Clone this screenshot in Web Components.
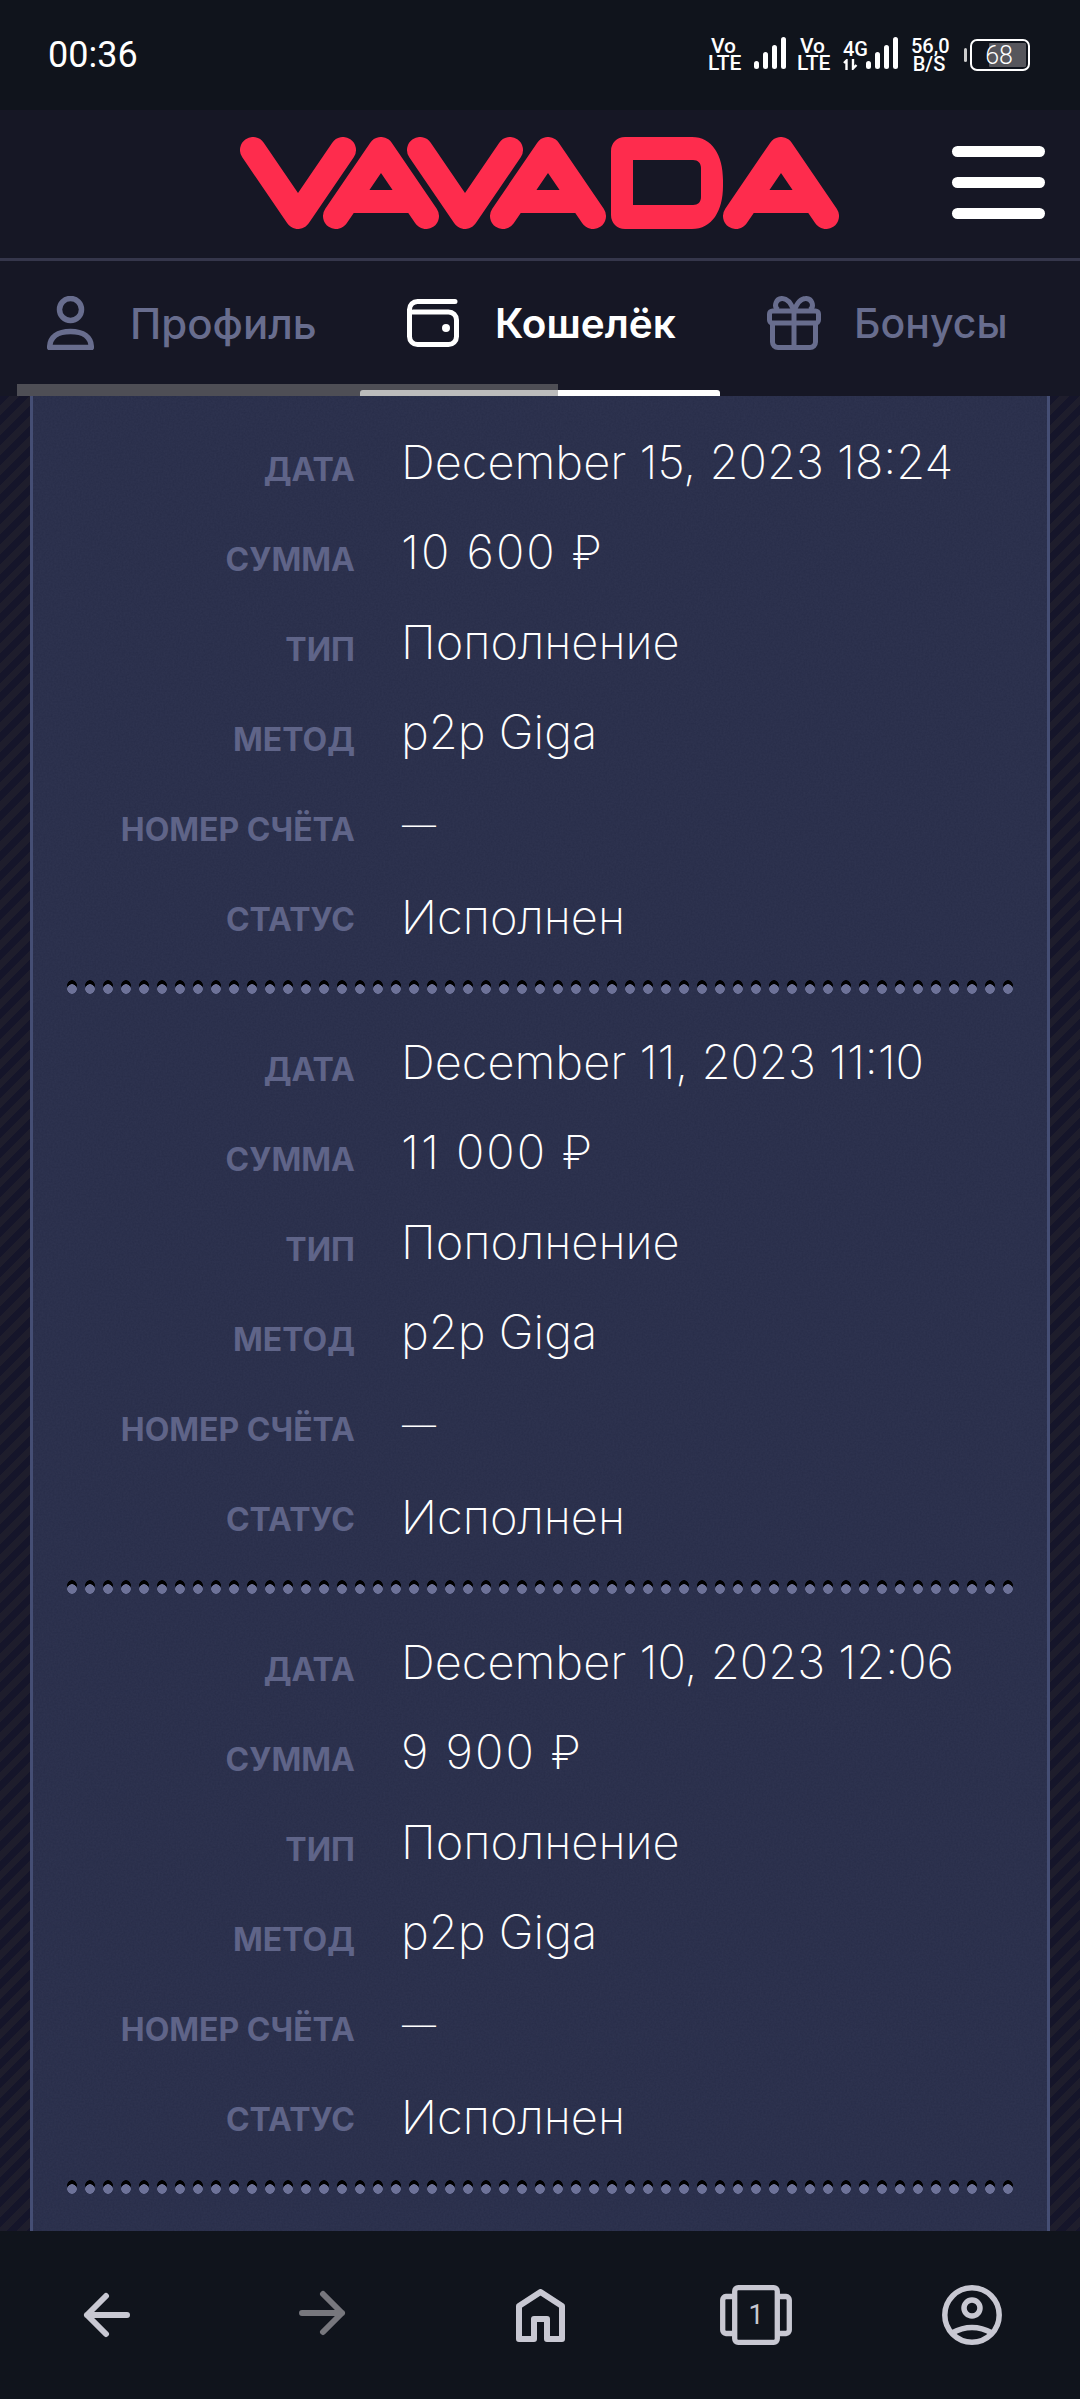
<!doctype html>
<html lang="ru">
<head>
<meta charset="utf-8">
<title>VAVADA</title>
<style>
	html, body { margin: 0; height: 100%; background: #10141c; }
	body {
		display: flex;
		flex-direction: column;
		height: 2399px;
		overflow: hidden;
		font-family: Inter, "Noto Sans", sans-serif;
	}
</style>
</head>
<body>
<status-bar></status-bar>
<site-header></site-header>
<account-tabs>
	<tab-item icon="user">Профиль</tab-item>
	<tab-item icon="wallet" active>Кошелёк</tab-item>
	<tab-item icon="gift">Бонусы</tab-item>
</account-tabs>
<tx-list>
	<tx-card date="December 15, 2023 18:24" amount="10 600 ₽"></tx-card>
	<tx-card date="December 11, 2023 11:10" amount="11 000 ₽"></tx-card>
	<tx-card date="December 10, 2023 12:06" amount="9 900 ₽"></tx-card>
</tx-list>
<browser-nav></browser-nav>

<script>
const BARS = `<svg width="32" height="32" viewBox="0 0 32 32" fill="#fff">
	<rect x="0" y="24" width="5" height="8" rx="2.5"/>
	<rect x="9" y="15" width="5" height="17" rx="2.5"/>
	<rect x="18" y="8" width="5" height="24" rx="2.5"/>
	<rect x="27" y="0" width="5" height="32" rx="2.5"/>
</svg>`;

class StatusBar extends HTMLElement {
	constructor() {
		super();
		this.attachShadow({ mode: "open" });
		this.shadowRoot.innerHTML = `
			<style>
				:host {
					display: flex;
					flex: none;
					align-items: center;
					height: 110px;
					padding: 0 50px 0 48px;
					box-sizing: border-box;
					background: #10141c;
					color: #fff;
					font-family: Roboto, sans-serif;
				}
				.time { font-size: 36px; margin-right: auto; }
				.icons { display: flex; align-items: center; height: 32px; }
				.stack {
					flex: none;
					font-weight: 500;
					font-size: 21px;
					line-height: 17px;
					text-align: center;
					white-space: pre-line;
				}
				.vo { width: 31px; }
				.net { width: 24px; font-size: 20px; line-height: 18px; text-align: left; }
				.net svg { margin-top: 1px; display: block; }
				.speed { width: 36px; margin: 0 23px 0 13px; font-size: 20px; line-height: 18px; }
				svg { flex: none; }
				.sig { margin: 0 11px 0 15px; }
				.battery {
					position: relative;
					display: flex;
					flex: none;
					align-items: center;
					justify-content: center;
					width: 60px;
					height: 32px;
					box-sizing: border-box;
					border: 2.5px solid #fff;
					border-radius: 7px;
					font-size: 25px;
					font-weight: 300;
				}
				.battery::before {
					content: "";
					position: absolute;
					left: -8px;
					top: 7px;
					width: 3px;
					height: 14px;
					border-radius: 2px;
					background: #ccc;
				}
				.fill {
					position: absolute;
					top: 2px;
					bottom: 2px;
					right: 2px;
					width: 37px;
					background: #56565c;
					border-radius: 1px;
				}
				.battery span { position: relative; left: -1px; }
			</style>
			<div class="time">00:36</div>
			<div class="icons">
				<div class="stack vo">Vo
LTE</div>
				<div class="sig">${BARS}</div>
				<div class="stack vo">Vo
LTE</div>
				<div class="stack net" style="margin-left:15px">4G<svg width="15" height="11" viewBox="0 0 15 11" fill="none" stroke="#fff" stroke-width="2.4">
						<path d="M3.5 11V1.5L1 4M10 0v9.5L13.5 6"/>
					</svg></div>
				<div style="margin-left:-1px">${BARS}</div>
				<div class="stack speed">56,0
B/S</div>
				<div class="battery"><div class="fill"></div><span>68</span></div>
			</div>
		`;
	}
}
customElements.define("status-bar", StatusBar);

class SiteHeader extends HTMLElement {
	constructor() {
		super();
		this.attachShadow({ mode: "open" });
		this.shadowRoot.innerHTML = `
			<style>
				:host {
					display: flex;
					flex: none;
					align-items: center;
					height: 151px;
					padding: 0 35px 3px 240px;
					box-sizing: border-box;
					background: #161725;
					border-bottom: 3px solid #35364b;
				}
				svg { display: block; }
				.menu {
					display: flex;
					flex-direction: column;
					gap: 20px;
					width: 93px;
					margin-left: auto;
				}
				.menu i { display: block; height: 11px; border-radius: 6px; background: #fff; }
			</style>
			<svg width="599" height="92" viewBox="240 137 599 92" role="img" aria-label="VAVADA">
				<g fill="none" stroke="#fe2c4d" stroke-width="26" stroke-linecap="round" stroke-linejoin="round">
					<path d="M253 150 298 216 343 150"/>
					<path d="M336 216 381 150 426 216"/>
					<path d="M420 150 465 216 510 150"/>
					<path d="M503 216 548 150 593 216"/>
					<path d="M736 216 781 150 826 216"/>
				</g>
				<g fill="#fe2c4d">
					<path d="M346 190H416V213H346Z"/>
					<path d="M513 190H583V213H513Z"/>
					<path d="M746 190H816V213H746Z"/>
					<path fill-rule="evenodd" d="M625 137H692C712 137 723 155 723 180V186C723 211 712 229 692 229H625C617 229 611 223 611 215V151C611 143 617 137 625 137ZM633 160V205H693C698 205 701 202 701 197V168C701 163 698 160 693 160Z"/>
				</g>
			</svg>
			<div class="menu"><i></i><i></i><i></i></div>
		`;
	}
}
customElements.define("site-header", SiteHeader);

const TAB_ICONS = {
	user: `<svg width="47" height="54" viewBox="0 0 47 54" fill="none" stroke="currentColor" stroke-width="5.5" stroke-linejoin="round">
		<circle cx="23.5" cy="13.5" r="11"/>
		<path d="M2.7 51.5C2.7 41 11 35.5 23.5 35.5S44.3 41 44.3 51.5Z"/>
	</svg>`,
	wallet: `<svg width="52" height="48" viewBox="0 0 52 48" fill="none" stroke="currentColor" stroke-width="5" stroke-linecap="round">
		<path d="M48 2.5H10.5A8 8 0 0 0 2.5 10.5V37.5A8 8 0 0 0 10.5 45.5H41.5A8 8 0 0 0 49.5 37.5V21A8 8 0 0 0 41.5 13H6"/>
		<circle cx="39" cy="29" r="4" fill="currentColor" stroke="none"/>
	</svg>`,
	gift: `<svg width="54" height="54" viewBox="0 0 54 54" fill="none" stroke="currentColor" stroke-width="5" stroke-linejoin="round">
		<rect x="2.5" y="15" width="49" height="12" rx="3"/>
		<path d="M5.5 27V46A5.5 5.5 0 0 0 11 51.5H43A5.5 5.5 0 0 0 48.5 46V27M27 15V51.5"/>
		<path d="M27 15C24 7 20 2.5 15.5 2.5A6.5 6.5 0 0 0 11 14M27 15C30 7 34 2.5 38.5 2.5A6.5 6.5 0 0 1 43 14"/>
	</svg>`,
};

class TabItem extends HTMLElement {
	constructor() {
		super();
		this.attachShadow({ mode: "open" });
		this.shadowRoot.innerHTML = `
			<style>
				:host {
					display: flex;
					align-items: center;
					gap: 36px;
					height: 100%;
					padding-left: 47px;
					box-sizing: border-box;
					color: #686d8e;
					font-size: 42px;
					font-weight: 500;
				}
				:host([active]) { color: #fff; font-size: 40.5px; font-weight: 600; }
				:host([icon="gift"]) { gap: 33px; font-size: 41px; }
				.icon { display: flex; flex: none; }
			</style>
			<span class="icon">${TAB_ICONS[this.getAttribute("icon")] || ""}</span>
			<slot></slot>
		`;
	}
}
customElements.define("tab-item", TabItem);

class AccountTabs extends HTMLElement {
	constructor() {
		super();
		this.attachShadow({ mode: "open" });
		this.shadowRoot.innerHTML = `
			<style>
				:host {
					position: relative;
					display: block;
					flex: none;
					height: 135px;
					background: #161725;
				}
				.row {
					display: grid;
					grid-template-columns: repeat(3, 360px);
					height: 124px;
				}
				.underline {
					position: absolute;
					left: 360px;
					bottom: 0;
					width: 360px;
					height: 6px;
					background: #fff;
					border-radius: 3px 3px 0 0;
				}
				.scrollbar {
					position: absolute;
					left: 17px;
					bottom: 0;
					width: 541px;
					height: 12px;
					background: rgba(128, 128, 128, 0.53);
				}
			</style>
			<div class="row"><slot></slot></div>
			<div class="underline"></div>
			<div class="scrollbar"></div>
		`;
	}
}
customElements.define("account-tabs", AccountTabs);

class TxRow extends HTMLElement {
	constructor() {
		super();
		this.attachShadow({ mode: "open" });
		this.shadowRoot.innerHTML = `
			<style>
				:host {
					display: grid;
					grid-template-columns: 322px 1fr;
					column-gap: 46px;
					align-items: center;
					height: 90px;
				}
				.label {
					position: relative;
					top: 6px;
					text-align: right;
					color: #5f6488;
					font-size: 32px;
					font-weight: 700;
					white-space: nowrap;
				}
				.value {
					color: #fff;
					font-size: 47px;
					font-weight: 250;
					white-space: nowrap;
					padding-bottom: 3px;
				}
				:host([wide]) .value { letter-spacing: 2px; }
				:host([short]) .value { font-size: 34px; padding: 3px 0 0 1px; }
				:host([low]) .value { padding: 7px 0 0; }
			</style>
			<div class="label">${this.getAttribute("label")}</div>
			<div class="value"><slot></slot></div>
		`;
	}
}
customElements.define("tx-row", TxRow);

class TxCard extends HTMLElement {
	constructor() {
		super();
		this.attachShadow({ mode: "open" });
		this.shadowRoot.innerHTML = `
			<style>
				:host { display: block; }
				.dots {
					height: 60px;
					margin: 0 30px;
					background-image:
						radial-gradient(circle at 9px 9px, #6d7298 4.5px, transparent 5px),
						radial-gradient(circle at 9px 5px, #000 4.5px, transparent 5px);
					background-size: 18px 14px;
					background-position: 0 22px, 0 22px;
					background-repeat: repeat-x;
				}
			</style>
			<tx-row label="ДАТА">${this.getAttribute("date")}</tx-row>
			<tx-row label="СУММА" wide>${this.getAttribute("amount")}</tx-row>
			<tx-row label="ТИП">Пополнение</tx-row>
			<tx-row label="МЕТОД">p2p Giga</tx-row>
			<tx-row label="НОМЕР СЧЁТА" short>—</tx-row>
			<tx-row label="СТАТУС" low>Исполнен</tx-row>
			<div class="dots"></div>
		`;
	}
}
customElements.define("tx-card", TxCard);

class TxList extends HTMLElement {
	constructor() {
		super();
		this.attachShadow({ mode: "open" });
		this.shadowRoot.innerHTML = `
			<style>
				:host {
					display: block;
					flex: 1;
					min-height: 0;
					overflow: hidden;
					padding: 0 30px;
					background: repeating-linear-gradient(135deg, #15152a 0 7px, #1e1d2c 7px 14px);
				}
				.sheet {
					position: relative;
					height: 100%;
					padding-top: 22px;
					box-sizing: border-box;
					background: #292e4a;
					border: solid #454e74;
					border-width: 0 3px;
				}
				.grain { position: absolute; inset: 0; width: 100%; height: 100%; opacity: 0.1; }
				::slotted(*) { position: relative; }
			</style>
			<div class="sheet">
				<svg class="grain" aria-hidden="true">
					<filter id="grain">
						<feTurbulence type="fractalNoise" baseFrequency="0.55" numOctaves="2" seed="4"/>
						<feColorMatrix values="0 0 0 0 0.3  0 0 0 0 0.33  0 0 0 0 0.5  0 0 0 0.7 -0.1"/>
					</filter>
					<rect width="100%" height="100%" filter="url(#grain)"/>
				</svg>
				<slot></slot>
			</div>
		`;
	}
}
customElements.define("tx-list", TxList);

class BrowserNav extends HTMLElement {
	constructor() {
		super();
		this.attachShadow({ mode: "open" });
		this.shadowRoot.innerHTML = `
			<style>
				:host {
					display: grid;
					flex: none;
					grid-template-columns: repeat(5, 216px);
					height: 168px;
					background: #10141c;
					color: #c8c8d2;
				}
				.btn { display: grid; place-items: center; }
				.btn > * { grid-area: 1 / 1; }
				.back { padding-right: 3px; }
				.fwd { color: #77777d; padding: 0 3px 4px 0; box-sizing: border-box; }
				svg { display: block; }
				.count { font-family: Roboto, sans-serif; font-size: 27px; line-height: 1; }
			</style>
			<div class="btn back">
				<svg width="47" height="46" viewBox="0 0 47 46" fill="none" stroke="currentColor" stroke-width="6" stroke-linecap="round" stroke-linejoin="round">
					<path d="M4 23H44M23 4 4 23 23 42"/>
				</svg>
			</div>
			<div class="btn fwd">
				<svg width="47" height="46" viewBox="0 0 47 46" fill="none" stroke="currentColor" stroke-width="6" stroke-linecap="round" stroke-linejoin="round">
					<path d="M43 23H3M24 4 43 23 24 42"/>
				</svg>
			</div>
			<div class="btn">
				<svg width="49" height="53" viewBox="0 0 49 53" fill="none" stroke="currentColor" stroke-width="6" stroke-linejoin="round">
					<path d="M3 50V17L24.5 3 46 17V50H31V30H18V50Z"/>
				</svg>
			</div>
			<div class="btn">
				<svg width="72" height="60" viewBox="0 0 72 60" fill="none" stroke="currentColor" stroke-width="5.3">
					<rect x="14.7" y="2.7" width="42.6" height="54.6" rx="3.5"/>
					<path d="M13 11.5H6A3.5 3.5 0 0 0 2.7 15V45A3.5 3.5 0 0 0 6 48.5H13M59 11.5H66A3.5 3.5 0 0 1 69.3 15V45A3.5 3.5 0 0 1 66 48.5H59"/>
				</svg>
				<span class="count">1</span>
			</div>
			<div class="btn">
				<svg width="60" height="60" viewBox="0 0 60 60" fill="none" stroke="currentColor" stroke-width="5.5">
					<circle cx="30" cy="30" r="27.2"/>
					<circle cx="30" cy="23" r="8"/>
					<path d="M10 48Q30 37 50 48"/>
				</svg>
			</div>
		`;
	}
}
customElements.define("browser-nav", BrowserNav);
</script>
</body>
</html>
